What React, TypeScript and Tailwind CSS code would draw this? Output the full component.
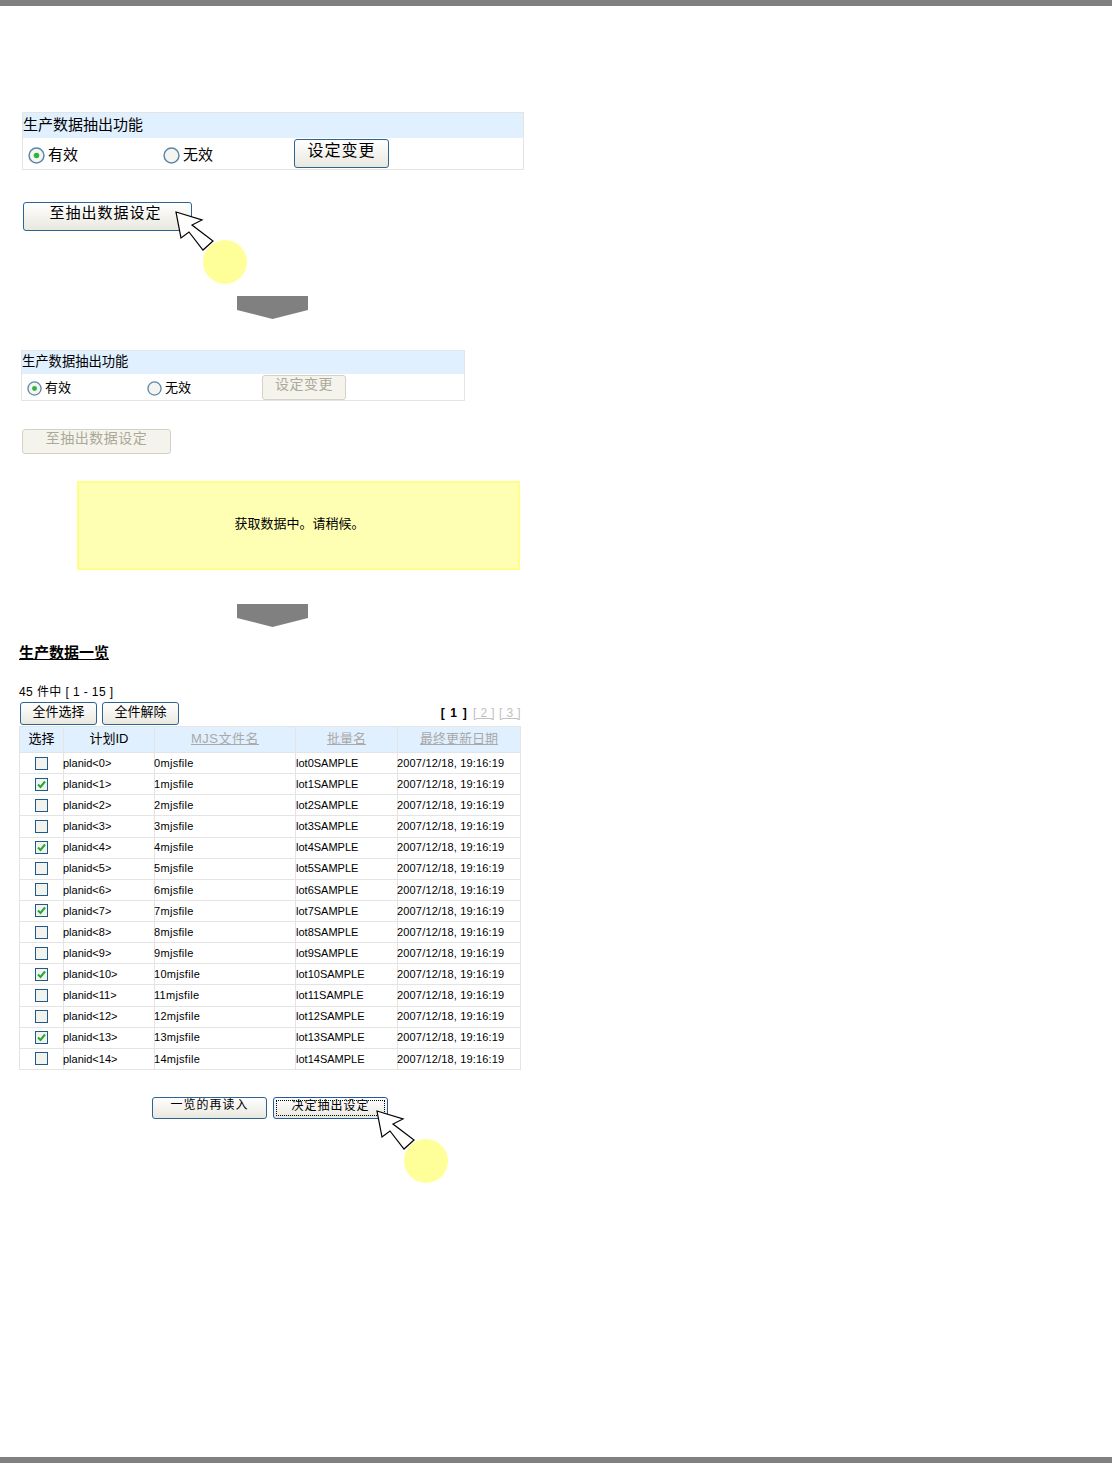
import type { ReactNode } from "react";

const font = "font-['Liberation_Sans','Noto_Sans_CJK_SC',sans-serif]";

function Btn({ className, disabled, focused, children }: { className: string; disabled?: boolean; focused?: boolean; children: ReactNode }) {
  return (
    <div
      className={
        "flex shrink-0 items-center justify-center rounded-[3px] border " +
        (disabled
          ? "border-[#d4d2c6] bg-[#f4f4ec] text-[#aca899] "
          : "border-[#2f6391] bg-linear-to-b from-white to-[#e9e8df] text-black ") +
        className
      }
    >
      {focused ? (
        <span className="flex h-full w-full items-center justify-center border border-dotted border-black pb-[3px]">{children}</span>
      ) : (
        children
      )}
    </div>
  );
}

function Radio({ on, size }: { on?: boolean; size: number }) {
  return (
    <svg width={size} height={size} viewBox="0 0 16 16" className="shrink-0">
      <circle cx="8" cy="8" r="7" fill="#f4f4f0" stroke="#5c86a8" strokeWidth="1.4" />
      {on && <circle cx="8" cy="8" r="2.6" fill="#2fb53c" />}
    </svg>
  );
}

function Check({ on }: { on?: boolean }) {
  return (
    <span className="mx-auto flex h-[13px] w-[13px] items-center justify-center border border-[#1f5a8c] bg-[#f3f3ee] indent-0">
      {on && (
        <svg width="9" height="9" viewBox="0 0 9 9">
          <path d="M1 4.5 L3.5 7 L8 1.5" fill="none" stroke="#25a832" strokeWidth="2" />
        </svg>
      )}
    </span>
  );
}

function Arrow() {
  return (
    <svg width="71" height="23" viewBox="0 0 71 23" className="ml-[237px] block">
      <path d="M0 0 H71 V14 L35.5 23 L0 14 Z" fill="#808080" />
    </svg>
  );
}

// pointer with the yellow step marker beside it
function Pointer({ className }: { className: string }) {
  return (
    <div className={"absolute h-[74px] w-[72px] " + className}>
      <div className="absolute left-[28px] top-[29px] h-[44px] w-[44px] rounded-full bg-[#ffff99]" />
      <svg width="40" height="42" viewBox="0 0 40 42" className="absolute left-0 top-0">
        <path d="M1 1 L27 9 L17 14 L38 30 L28 39 L14 21 L6 27 Z" fill="#fff" stroke="#000" strokeWidth="1.2" strokeLinejoin="miter" />
      </svg>
    </div>
  );
}

function Panel({ width, head, headText, textSize, first, second, button, disabled, radioSize }: {
  width: string; head: string; headText: string; textSize: string; first: string; second: string; button: string; disabled?: boolean; radioSize: number;
}) {
  return (
    <div className={"border border-[#e4e4e4] " + width}>
      <div className={"flex items-center bg-[#e1f0fe] " + head + " " + headText}>生产数据抽出功能</div>
      <div className={"flex items-center " + textSize}>
        <div className={"flex items-center gap-[3px] pl-[5px] " + first}>
          <Radio on size={radioSize} />
          <span>有效</span>
        </div>
        <div className={"flex items-center gap-[3px] " + second}>
          <Radio size={radioSize} />
          <span>无效</span>
        </div>
        <Btn disabled={disabled} className={button}>设定变更</Btn>
      </div>
    </div>
  );
}

const checked = [1, 4, 7, 10, 13];
const rows = Array.from({ length: 15 }, (_, i) => i);

export default function App() {
  return (
    <div className={"flex h-[1463px] flex-col bg-white text-black " + font}>
      <div className="h-[6px] bg-[#808080]" />

      <div className="flex flex-col pl-[22px] pt-[106px]">
        <Panel width="w-[502px]" head="h-[25px] pb-px" headText="text-[15px]" textSize="h-[31px] text-[15px]" first="mt-[3px] w-[140px]" second="mt-[3px] w-[131px]" button="h-[29px] w-[95px] pb-[6px] text-[16px] tracking-[1px]" radioSize={17} />

        <div className="relative ml-[1px] mt-[32px] w-fit">
          <Btn className="h-[29px] w-[169px] pb-[6px] pr-[4px] text-[15px] tracking-[1px]">至抽出数据设定</Btn>
          <Pointer className="left-[152px] top-[9px]" />
        </div>

        <div className="-ml-[22px] mt-[65px]"><Arrow /></div>

        <div className="-ml-[1px] mt-[31px]">
          <Panel width="w-[444px]" head="h-[23px] pb-[1px]" headText="text-[13.3px]" textSize="h-[26px] text-[13px]" first="mt-[2px] w-[125px]" second="mt-[2px] w-[115px]" button="h-[25px] w-[84px] pb-[6px] text-[14px] tracking-[0.5px]" disabled radioSize={15} />
        </div>

        <Btn disabled className="mt-[28px] h-[25px] w-[149px] pb-[6px] text-[14px] tracking-[0.5px]">至抽出数据设定</Btn>

        <div className="ml-[55px] mt-[27px] flex h-[89px] w-[443px] items-center justify-center border-2 border-[#ffff88] bg-[#ffffb3] pb-[3px] pl-[2px] text-[13px]">
          获取数据中。请稍候。
        </div>

        <div className="-ml-[22px] mt-[34px]"><Arrow /></div>
      </div>

      <div className="flex w-[521px] flex-col pl-[19px]">
        <div className="mt-[17px] text-[15px] font-bold leading-[18px] underline">生产数据一览</div>
        <div className="mt-[23px] text-[12px] leading-[14px] tracking-[0.4px]">45 件中 [ 1 - 15 ]</div>
        <div className="mt-[3px] flex items-end">
          <Btn className="ml-[1px] h-[23px] w-[77px] pb-[4px] text-[13px]">全件选择</Btn>
          <Btn className="ml-[5px] h-[23px] w-[77px] pb-[4px] text-[13px]">全件解除</Btn>
          <div className="ml-auto flex gap-[4px] pb-[3px] text-[12px] tracking-[0.4px] text-[#c0c0c0]">
            <span className="mr-[1px] font-bold tracking-[1.2px] text-black">[ 1 ]</span>
            <span className="underline">[ 2 ]</span>
            <span className="underline">[ 3 ]</span>
          </div>
        </div>

        <table className="mt-[1px] w-[501px] table-fixed border-collapse text-[11px]">
          <colgroup>
            <col className="w-[44px]" />
            <col className="w-[91px]" />
            <col className="w-[141px]" />
            <col className="w-[102px]" />
            <col className="w-[123px]" />
          </colgroup>
          <thead>
            <tr className="h-[26px] bg-[#e1f0fe] text-[13px] font-normal">
              <th className="border border-[#e4e4e4] pb-[2px] font-normal">选择</th>
              <th className="border border-[#e4e4e4] pb-[2px] font-normal">计划ID</th>
              <th className="border border-[#e4e4e4] pb-[2px] font-normal tracking-[0.5px] text-[#a9a9a9] underline">MJS文件名</th>
              <th className="border border-[#e4e4e4] pb-[2px] font-normal text-[#a9a9a9] underline">批量名</th>
              <th className="border border-[#e4e4e4] pb-[2px] font-normal text-[#a9a9a9] underline">最终更新日期</th>
            </tr>
          </thead>
          <tbody className="indent-[-1px]">
            {rows.map((i) => (
              <tr key={i} className="h-[21.13px]">
                <td className="border border-[#e4e4e4]"><Check on={checked.includes(i)} /></td>
                <td className="border border-[#e4e4e4]">{`planid<${i}>`}</td>
                <td className="border border-[#e4e4e4] tracking-[0.3px]">{i}mjsfile</td>
                <td className="border border-[#e4e4e4] pl-px">lot{i}SAMPLE</td>
                <td className="border border-[#e4e4e4] tracking-[0.17px]">2007/12/18, 19:16:19</td>
              </tr>
            ))}
          </tbody>
        </table>

        <div className="relative ml-[133px] mt-[27px] flex w-fit gap-[6px]">
          <Btn className="h-[22px] w-[115px] pb-[5px] text-[12px] tracking-[1px]">一览的再读入</Btn>
          <Btn focused className="h-[22px] w-[115px] border-[#2458a0] p-[2px] text-[12px] tracking-[1px]">决定抽出设定</Btn>
          <Pointer className="left-[224px] top-[13px]" />
        </div>
      </div>

      <div className="mt-auto h-[6px] bg-[#808080]" />
    </div>
  );
}
